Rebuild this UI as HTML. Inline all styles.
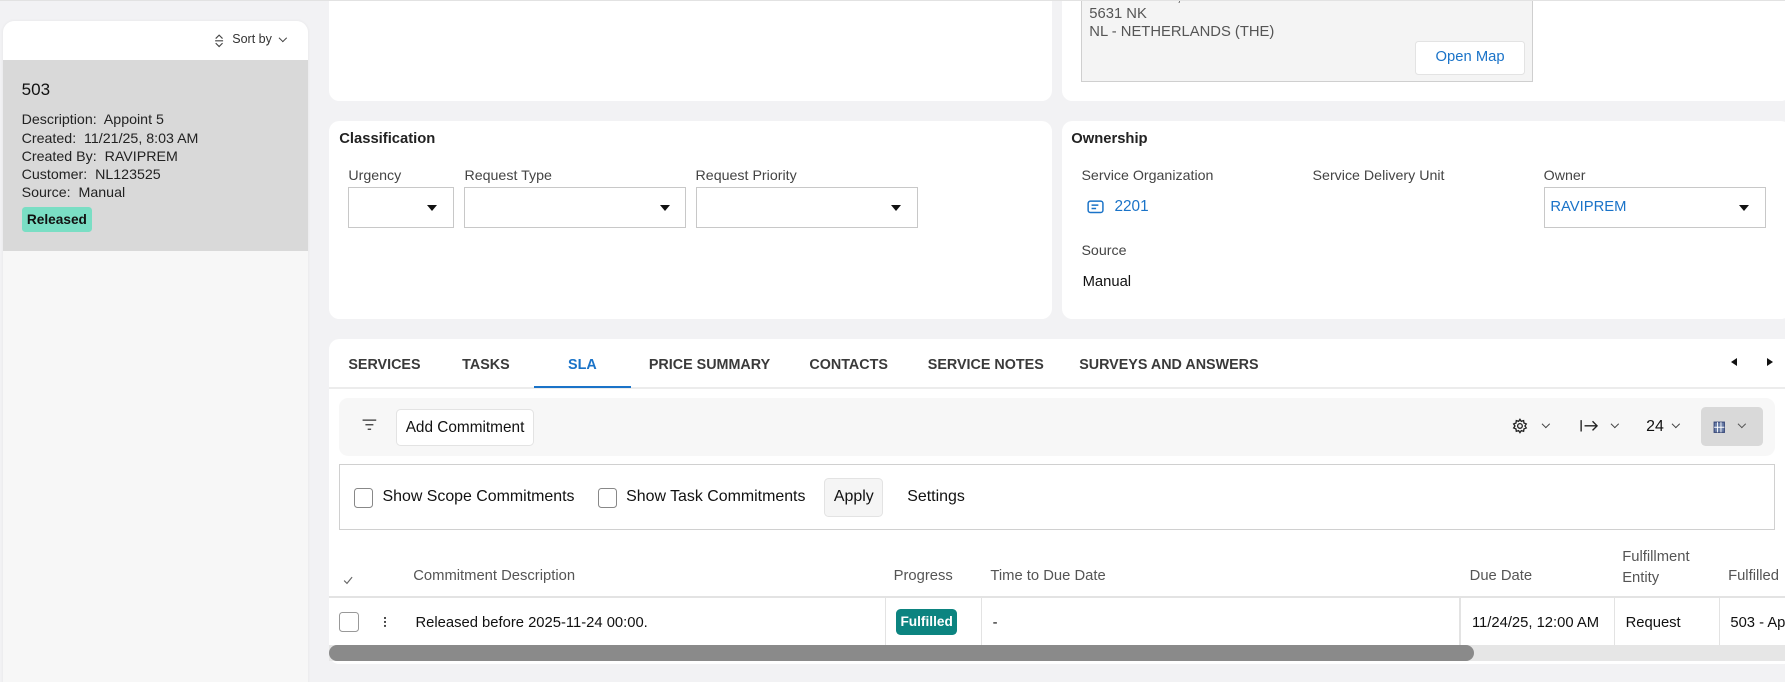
<!DOCTYPE html>
<html><head><meta charset="utf-8"><style>
*{box-sizing:border-box;margin:0;padding:0}
html,body{width:1785px;height:682px;overflow:hidden;background:#f2f2f4}
#w{zoom:1.13839;width:1568px;height:600px;position:relative;font-family:"Liberation Sans",Arial,sans-serif;color:#222;border-top:1px solid #e2e2e2;overflow:hidden}
.a{position:absolute;white-space:nowrap}
.card{position:absolute;background:#fff;border-radius:9px}
.lbl{font-size:12.5px;color:#444}
.sel{position:absolute;border:1px solid #c8c8c8;background:#fff;height:36px}
.tri{position:absolute;right:14px;top:15px;width:0;height:0;border-left:5px solid transparent;border-right:5px solid transparent;border-top:6px solid #111}
.tab{position:absolute;top:313px;font-size:12.6px;font-weight:bold;color:#3a3a3a;white-space:nowrap}
.cb{position:absolute;width:17px;height:17px;border:1px solid #888;border-radius:3px;background:#fff}
.th{position:absolute;font-size:13px;color:#555;white-space:nowrap}
.td{position:absolute;font-size:13px;color:#111;white-space:nowrap}
.chev{position:absolute;width:6px;height:6px;border-right:1.2px solid #444;border-bottom:1.2px solid #444;transform:rotate(45deg)}
</style></head><body><div id="w">
<!-- left panel -->
<div class="a" style="left:3px;top:18px;width:268px;height:590px;background:#f7f7f7;border-radius:10px 10px 0 0;overflow:hidden;box-shadow:0 0 3px rgba(0,0,0,.06)">
 <div style="position:absolute;left:0;top:0;width:268px;height:34px;background:#fff"></div>
 <svg style="position:absolute;left:185px;top:11px" width="9" height="12" viewBox="0 0 9 12"><path d="M1.5 4 L4.5 1 L7.5 4 M1.5 8 L4.5 11 L7.5 8 M1 6 H8" stroke="#444" fill="none" stroke-width="1"/></svg>
 <div class="a" style="left:201px;top:9px;font-size:11px;color:#333">Sort by</div>
 <div class="chev" style="left:243px;top:12px;width:5px;height:5px"></div>
 <div style="position:absolute;left:0;top:34px;width:268px;height:168px;background:#d9d9d9"></div>
 <div class="a" style="left:16px;top:51px;font-size:15px;color:#111">503</div>
 <div class="a" style="left:16px;top:79px;font-size:12.5px;line-height:16px;color:#222">Description:&nbsp; Appoint 5<br>Created:&nbsp; 11/21/25, 8:03 AM<br>Created By:&nbsp; RAVIPREM<br>Customer:&nbsp; NL123525<br>Source:&nbsp; Manual</div>
 <div class="a" style="left:16px;top:163px;width:62px;height:22px;background:#7adec4;border-radius:3px;font-size:12px;font-weight:bold;line-height:22px;text-align:center;color:#111">Released</div>
</div>
<!-- top cards -->
<div class="card" style="left:289px;top:-10px;width:635px;height:98px"></div>
<div class="card" style="left:933px;top:-10px;width:640px;height:98px">
 <div class="a" style="left:17px;top:0;width:397px;height:81px;background:#f4f4f4;border:1px solid #cfcfcf;border-top:none;overflow:hidden">
  <div class="a" style="left:6px;top:-1px;font-size:13px;color:#555;line-height:15.5px">EINDHOVEN,<br>5631 NK<br>NL - NETHERLANDS (THE)</div>
  <div class="a" style="left:292px;top:45px;width:97px;height:30px;background:#fff;border:1px solid #e3e3e3;border-radius:3px;font-size:13px;color:#1a73c8;text-align:center;line-height:28px">Open Map</div>
 </div>
</div>
<!-- classification -->
<div class="card" style="left:289px;top:105px;width:635px;height:174px">
 <div class="a" style="left:9px;top:9px;font-size:13px;font-weight:bold">Classification</div>
 <div class="a lbl" style="left:17px;top:42px">Urgency</div>
 <div class="a lbl" style="left:119px;top:42px">Request Type</div>
 <div class="a lbl" style="left:322px;top:42px">Request Priority</div>
 <div class="sel" style="left:17px;top:58px;width:93px"><div class="tri"></div></div>
 <div class="sel" style="left:119px;top:58px;width:195px"><div class="tri"></div></div>
 <div class="sel" style="left:322px;top:58px;width:195px"><div class="tri"></div></div>
</div>
<!-- ownership -->
<div class="card" style="left:933px;top:105px;width:640px;height:174px">
 <div class="a" style="left:8px;top:9px;font-size:13px;font-weight:bold">Ownership</div>
 <div class="a lbl" style="left:17px;top:42px">Service Organization</div>
 <div class="a lbl" style="left:220px;top:42px">Service Delivery Unit</div>
 <div class="a lbl" style="left:423px;top:42px">Owner</div>
 <svg style="position:absolute;left:22px;top:70px" width="15" height="12" viewBox="0 0 15 12"><rect x="1" y="1" width="13" height="10" rx="2" fill="none" stroke="#1a73c8" stroke-width="1.3"/><path d="M4 4.5 H10 M4 7.5 H8" stroke="#1a73c8" stroke-width="1.3"/></svg>
 <div class="a" style="left:46px;top:68px;font-size:13.5px;color:#1a73c8">2201</div>
 <div class="sel" style="left:423px;top:58px;width:195px"><div class="a" style="left:5px;top:10px;font-size:13px;color:#1a73c8">RAVIPREM</div><div class="tri"></div></div>
 <div class="a lbl" style="left:17px;top:108px">Source</div>
 <div class="a" style="left:18px;top:135px;font-size:13px;color:#111">Manual</div>
</div>
<!-- bottom card -->
<div class="card" style="left:289px;top:297px;width:1290px;height:285px;border-radius:9px 0 0 9px"></div>
<div style="position:absolute;left:289px;top:339px;width:1279px;height:2px;background:#ececec"></div>
<div class="tab" style="left:306px">SERVICES</div>
<div class="tab" style="left:406px">TASKS</div>
<div class="tab" style="left:499px;color:#1a73c8">SLA</div>
<div style="position:absolute;left:469px;top:338px;width:85px;height:2px;background:#1a73c8"></div>
<div class="tab" style="left:570px">PRICE SUMMARY</div>
<div class="tab" style="left:711px">CONTACTS</div>
<div class="tab" style="left:815px">SERVICE NOTES</div>
<div class="tab" style="left:948px">SURVEYS AND ANSWERS</div>
<div class="a" style="left:1521px;top:314px;width:0;height:0;border-top:4px solid transparent;border-bottom:4px solid transparent;border-right:6px solid #111"></div>
<div class="a" style="left:1552px;top:314px;width:0;height:0;border-top:4px solid transparent;border-bottom:4px solid transparent;border-left:6px solid #111"></div>
<!-- toolbar -->
<div class="a" style="left:298px;top:349px;width:1261px;height:51px;background:#f7f7f7;border-radius:8px"></div>
<svg style="position:absolute;left:318px;top:367px" width="13" height="11" viewBox="0 0 13 11"><path d="M0.5 1 H12.5 M3 5 H10 M5 9 H8" stroke="#333" stroke-width="1.1"/></svg>
<div class="a" style="left:348px;top:358px;width:121px;height:33px;background:#fff;border:1px solid #e3e3e3;border-radius:4px;font-size:13.5px;line-height:31px;text-align:center;color:#111">Add Commitment</div>
<svg style="position:absolute;left:1328px;top:366px" width="14" height="14" viewBox="0 0 24 24"><path d="M12 2l2 3 3.5-1 .5 3.5 3.5 1.5-2 3 2 3-3.5 1.5-.5 3.5-3.5-1-2 3-2-3-3.5 1-.5-3.5L2.5 15l2-3-2-3L6 7.5 6.5 4 10 5z" fill="none" stroke="#222" stroke-width="2"/><circle cx="12" cy="12" r="3.5" fill="none" stroke="#222" stroke-width="2"/></svg>
<div class="chev" style="left:1355px;top:369px;width:5px;height:5px"></div>
<svg style="position:absolute;left:1388px;top:367px" width="17" height="12" viewBox="0 0 17 12"><path d="M1 1 V11 M4 6 H15 M11 2 L15 6 L11 10" stroke="#222" stroke-width="1.2" fill="none"/></svg>
<div class="chev" style="left:1416px;top:369px;width:5px;height:5px"></div>
<div class="a" style="left:1446px;top:366px;font-size:14px;color:#111">24</div>
<div class="chev" style="left:1470px;top:369px;width:5px;height:5px"></div>
<div class="a" style="left:1494px;top:357px;width:55px;height:34px;background:#d9d9d9;border-radius:4px"></div>
<svg style="position:absolute;left:1505px;top:369px" width="11" height="11" viewBox="0 0 11 11"><rect x="1" y="1" width="9" height="9" fill="#6b7fa8" stroke="#3a4a7a"/><path d="M4 1 V10 M7 1 V10 M1 5.5 H10" stroke="#fff" stroke-width=".8"/></svg>
<div class="chev" style="left:1528px;top:369px;width:5px;height:5px;border-color:#555"></div>
<!-- filter box -->
<div class="a" style="left:298px;top:407px;width:1261px;height:58px;border:1px solid #d0d0d0;background:#fff"></div>
<div class="cb" style="left:311px;top:428px"></div>
<div class="a" style="left:336px;top:428px;font-size:14px;color:#111">Show Scope Commitments</div>
<div class="cb" style="left:525px;top:428px"></div>
<div class="a" style="left:550px;top:428px;font-size:14px;color:#111">Show Task Commitments</div>
<div class="a" style="left:724px;top:419px;width:52px;height:34px;background:#f5f5f5;border:1px solid #e3e3e3;border-radius:4px;font-size:14px;text-align:center;line-height:32px;color:#111">Apply</div>
<div class="a" style="left:797px;top:428px;font-size:14px;color:#111">Settings</div>
<!-- table -->
<svg style="position:absolute;left:301px;top:505px" width="9" height="8" viewBox="0 0 9 8"><path d="M1 4 L3.5 6.5 L8 1" stroke="#666" fill="none" stroke-width="1"/></svg>
<div class="th" style="left:363px;top:498px">Commitment Description</div>
<div class="th" style="left:785px;top:498px">Progress</div>
<div class="th" style="left:870px;top:498px">Time to Due Date</div>
<div class="th" style="left:1291px;top:498px">Due Date</div>
<div class="th" style="left:1425px;top:480px;line-height:18px">Fulfillment<br>Entity</div>
<div class="th" style="left:1518px;top:498px">Fulfilled</div>
<div class="a" style="left:289px;top:523px;width:1279px;height:1px;background:#e3e3e3"></div>
<div class="a" style="left:777px;top:524px;width:1px;height:42px;background:#e3e3e3"></div>
<div class="a" style="left:862px;top:524px;width:1px;height:42px;background:#e3e3e3"></div>
<div class="a" style="left:1282px;top:524px;width:1px;height:42px;background:#e3e3e3"></div>
<div class="a" style="left:1418px;top:524px;width:1px;height:42px;background:#e3e3e3"></div>
<div class="a" style="left:1510px;top:524px;width:1px;height:42px;background:#e3e3e3"></div>
<div class="cb" style="left:298px;top:537px;border-color:#999"></div>
<div class="a" style="left:337px;top:540px;width:2px;height:10px;background:radial-gradient(circle,#333 0.9px,transparent 1.1px) 0 0/2px 3.5px"></div>
<div class="td" style="left:365px;top:539px">Released before 2025-11-24 00:00.</div>
<div class="a" style="left:787px;top:534px;width:54px;height:23px;background:#0c8480;border-radius:4px;color:#fff;font-size:12px;font-weight:bold;text-align:center;line-height:23px">Fulfilled</div>
<div class="td" style="left:872px;top:539px">-</div>
<div class="td" style="left:1293px;top:539px">11/24/25, 12:00 AM</div>
<div class="td" style="left:1428px;top:539px">Request</div>
<div class="td" style="left:1520px;top:539px">503 - Appoint 5</div>
<div class="a" style="left:289px;top:566px;width:1279px;height:14px;background:#e6e6e6"></div>
<div class="a" style="left:289px;top:566px;width:1006px;height:14px;background:#8a8a8a;border-radius:7px"></div>
</div></body></html>
